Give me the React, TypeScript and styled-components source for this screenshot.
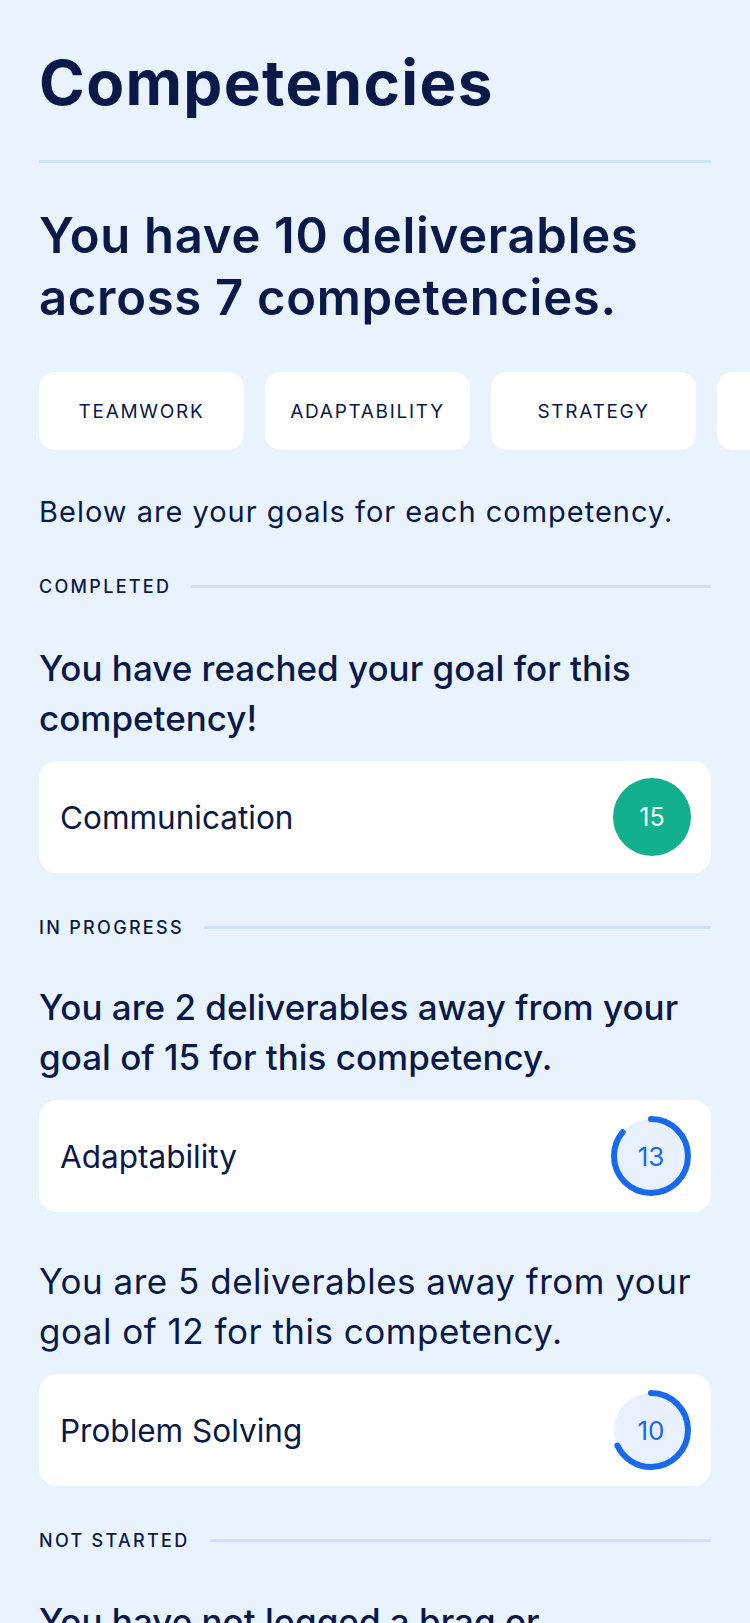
import React from 'react';
import styled, { createGlobalStyle } from 'styled-components';

const GlobalStyle = createGlobalStyle`
  html, body {
    margin: 0;
    padding: 0;
    background: #e9f3fe;
    overflow-x: hidden;
  }
  body {
    font-family: Inter, "Noto Sans", sans-serif;
    color: #0a1947;
  }
`;

const Page = styled.div`
  padding: 46px 39px 40px;
  overflow: hidden;
`;

const Title = styled.h1`
  margin: 0;
  font-size: 62px;
  line-height: 74px;
  font-weight: 700;
  letter-spacing: 1.3px;
`;

const Divider = styled.hr`
  margin: 40px 0 0;
  border: none;
  height: 3px;
  border-radius: 2px;
  background: #cfe1f8;
`;

const Summary = styled.h2`
  margin: 42px 0 0;
  font-size: 49px;
  line-height: 62px;
  font-weight: 600;
  letter-spacing: 0.7px;
`;

const ChipRow = styled.div`
  display: flex;
  gap: 21px;
  margin-top: 43px;
  margin-right: -39px;
`;

const Chip = styled.div`
  flex: 0 0 205px;
  height: 78px;
  border-radius: 16px;
  background: #ffffff;
  display: flex;
  align-items: center;
  justify-content: center;
  font-size: 19px;
  letter-spacing: 1.7px;
  text-transform: uppercase;
  overflow: hidden;
  white-space: nowrap;
`;

const Intro = styled.p`
  margin: 44px 0 0;
  font-size: 29px;
  line-height: 36px;
  letter-spacing: 1px;
`;

const SectionLabel = styled.div<{ $gap: number }>`
  display: flex;
  align-items: center;
  gap: 20px;
  height: 24px;
  margin-top: ${(p) => p.$gap}px;
  font-size: 18px;
  letter-spacing: 2.3px;
  font-weight: 500;
  text-transform: uppercase;
  white-space: nowrap;

  &::after {
    content: '';
    flex: 1;
    height: 3px;
    border-radius: 2px;
    background: #cfe1f8;
  }
`;

const Message = styled.p<{ $light?: boolean; $gap?: number }>`
  margin: ${(p) => p.$gap ?? 45}px 0 0;
  font-size: 35px;
  line-height: 50px;
  font-weight: ${(p) => (p.$light ? 400 : 500)};
  letter-spacing: ${(p) => (p.$light ? 0.5 : 0)}px;
`;

const Card = styled.div`
  margin-top: 18px;
  height: 112px;
  border-radius: 18px;
  background: #ffffff;
  display: flex;
  align-items: center;
  justify-content: space-between;
  padding: 0 20px 0 21px;
  box-sizing: border-box;
`;

const CardName = styled.span`
  font-size: 31.5px;
`;

const DoneBadge = styled.div`
  width: 78px;
  height: 78px;
  border-radius: 50%;
  background: #13b08e;
  color: #ffffff;
  display: flex;
  align-items: center;
  justify-content: center;
  font-size: 25px;
`;

const RingWrap = styled.div`
  position: relative;
  width: 80px;
  height: 80px;
`;

const RingValue = styled.span`
  position: absolute;
  inset: 0;
  display: flex;
  align-items: center;
  justify-content: center;
  font-size: 26px;
  color: #1769f0;
`;

const Ring = ({ value, progress }: { value: number; progress: number }) => {
  const r = 37;
  const c = 2 * Math.PI * r;
  return (
    <RingWrap>
      <svg width="80" height="80" viewBox="0 0 80 80">
        <circle cx="40" cy="40" r={r} fill="#e8f1fd" />
        <circle
          cx="40"
          cy="40"
          r={r}
          fill="none"
          stroke="#1769f0"
          strokeWidth="6"
          strokeLinecap="round"
          strokeDasharray={`${c * progress} ${c}`}
          transform="rotate(-90 40 40)"
        />
      </svg>
      <RingValue>{value}</RingValue>
    </RingWrap>
  );
};

const chips = ['Teamwork', 'Adaptability', 'Strategy', 'Leadership'];

export default function App() {
  return (
    <>
      <GlobalStyle />
      <Page>
        <Title>Competencies</Title>
        <Divider />
        <Summary>
          You have 10 deliverables
          <br />
          across 7 competencies.
        </Summary>
        <ChipRow>
          {chips.map((c) => (
            <Chip key={c}>{c}</Chip>
          ))}
        </ChipRow>
        <Intro>Below are your goals for each competency.</Intro>

        <SectionLabel $gap={44}>Completed</SectionLabel>
        <Message>
          You have reached your goal for this
          <br />
          competency!
        </Message>
        <Card>
          <CardName>Communication</CardName>
          <DoneBadge>15</DoneBadge>
        </Card>

        <SectionLabel $gap={42}>In Progress</SectionLabel>
        <Message $gap={43}>
          You are 2 deliverables away from your
          <br />
          goal of 15 for this competency.
        </Message>
        <Card>
          <CardName>Adaptability</CardName>
          <Ring value={13} progress={0.86} />
        </Card>
        <Message $light $gap={44}>
          You are 5 deliverables away from your
          <br />
          goal of 12 for this competency.
        </Message>
        <Card>
          <CardName>Problem Solving</CardName>
          <Ring value={10} progress={0.68} />
        </Card>

        <SectionLabel $gap={42}>Not Started</SectionLabel>
        <Message $gap={44}>
          You have not logged a brag or
          <br />
          deliverable for this competency.
        </Message>
      </Page>
    </>
  );
}
